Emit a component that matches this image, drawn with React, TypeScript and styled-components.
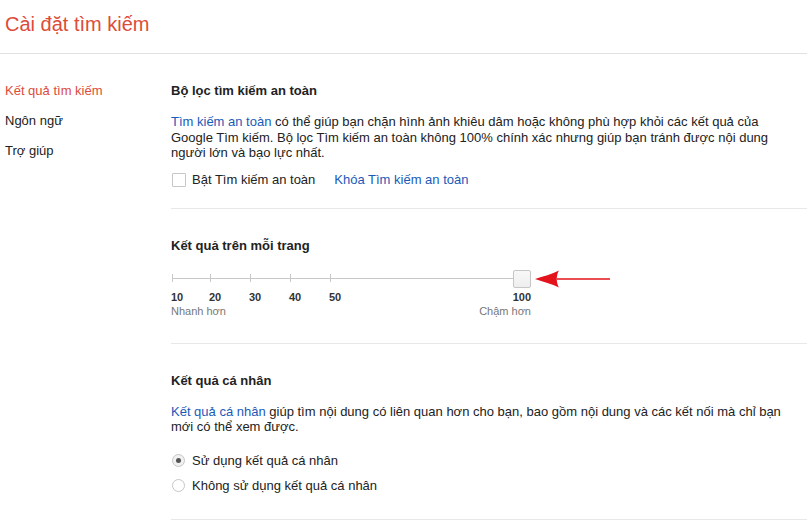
import styled, { createGlobalStyle } from "styled-components";

const GlobalStyle = createGlobalStyle`
  html, body {
    margin: 0;
    padding: 0;
    background: #fff;
  }
  body {
    font-family: "Liberation Sans", Arial, sans-serif;
    font-size: 13px;
    color: #222;
  }
`;

const COLORS = {
  red: "#dd4b39",
  text: "#222",
  link: "#1a5ab8",
  grey: "#777",
  divider: "#e8e8e8",
  control: "#c6c6c6",
};

const Page = styled.div`
  width: 807px;
`;

const Header = styled.header`
  padding: 12px 0 17px 5px;
  border-bottom: 1px solid #e1e1e1;
`;

const Title = styled.h1`
  margin: 0;
  font-size: 20px;
  line-height: 24px;
  font-weight: normal;
  color: ${COLORS.red};
`;

const Body = styled.div`
  display: flex;
`;

const Nav = styled.nav`
  width: 171px;
  flex: none;
  padding: 29px 0 0 5px;
  box-sizing: border-box;
  display: flex;
  flex-direction: column;
  gap: 14px;
`;

const NavItem = styled.div<{ $active?: boolean }>`
  line-height: 16px;
  color: ${({ $active }) => ($active ? COLORS.red : COLORS.text)};
  cursor: pointer;
`;

const Content = styled.main`
  flex: 1;
`;

const Section = styled.section<{ $bottom: number }>`
  padding: 29px 0 ${({ $bottom }) => $bottom}px 0;
  border-bottom: 1px solid ${COLORS.divider};
`;

const Heading = styled.h2`
  margin: 0;
  font-size: 13px;
  line-height: 16px;
  font-weight: bold;
  color: ${COLORS.text};
`;

const Paragraph = styled.p`
  margin: 15px 0 0;
  max-width: 620px;
  line-height: 15.5px;
`;

const Link = styled.a`
  color: ${COLORS.link};
  text-decoration: none;
  cursor: pointer;
`;

const CheckRow = styled.div`
  display: flex;
  align-items: center;
  margin-top: 12px;
  height: 14px;
  line-height: 14px;
`;

const CheckBox = styled.span`
  width: 12px;
  height: 12px;
  border: 1px solid ${COLORS.control};
  border-radius: 1px;
  background: #fff;
  margin: 0 6px 0 1px;
`;

const LockLink = styled(Link)`
  margin-left: 19px;
`;

const Slider = styled.div`
  margin-top: 16px;
  width: 360px;
`;

const Track = styled.div`
  position: relative;
  height: 18px;
  width: 360px;
  &::before {
    content: "";
    position: absolute;
    left: 1px;
    width: 351px;
    top: 8px;
    height: 1px;
    background: #c8c8c8;
  }
`;

const Tick = styled.span`
  position: absolute;
  top: 4px;
  width: 1px;
  height: 8px;
  background: #c8c8c8;
`;

const Thumb = styled.span`
  position: absolute;
  top: 0;
  left: 342px;
  width: 16px;
  height: 16px;
  border: 1px solid ${COLORS.control};
  border-radius: 2px;
  background: linear-gradient(#f8f8f8, #eeeeee);
  box-sizing: content-box;
`;

const Arrow = styled.svg`
  position: absolute;
  left: 364px;
  top: -2px;
`;

const Values = styled.div`
  position: relative;
  height: 13px;
  margin-top: 3px;
  font-size: 11px;
  line-height: 13px;
  font-weight: bold;
  color: #333;
`;

const Value = styled.span`
  position: absolute;
  top: 0;
`;

const Speed = styled.div`
  display: flex;
  justify-content: space-between;
  width: 360px;
  font-size: 11px;
  line-height: 14px;
  color: ${COLORS.grey};
`;

const RadioList = styled.div`
  margin-top: 19px;
  display: flex;
  flex-direction: column;
  gap: 11px;
`;

const RadioRow = styled.label`
  display: flex;
  align-items: center;
  height: 14px;
  line-height: 14px;
  cursor: pointer;
`;

const Radio = styled.span<{ $checked?: boolean }>`
  width: 13px;
  height: 13px;
  border-radius: 50%;
  border: 1px solid ${COLORS.control};
  background: ${({ $checked }) => ($checked ? "#f1f1f1" : "#fff")};
  margin: 0 7px 0 1px;
  display: flex;
  align-items: center;
  justify-content: center;
  box-sizing: border-box;
  &::after {
    content: "";
    display: ${({ $checked }) => ($checked ? "block" : "none")};
    width: 5px;
    height: 5px;
    border-radius: 50%;
    background: #555;
  }
`;

const ticks = [
  { value: 10, x: 1 },
  { value: 20, x: 39 },
  { value: 30, x: 79 },
  { value: 40, x: 119 },
  { value: 50, x: 159 },
];

export default function App() {
  return (
    <Page>
      <GlobalStyle />
      <Header>
        <Title>Cài đặt tìm kiếm</Title>
      </Header>
      <Body>
        <Nav>
          <NavItem $active>Kết quả tìm kiếm</NavItem>
          <NavItem>Ngôn ngữ</NavItem>
          <NavItem>Trợ giúp</NavItem>
        </Nav>
        <Content>
          <Section $bottom={21}>
            <Heading>Bộ lọc tìm kiếm an toàn</Heading>
            <Paragraph>
              <Link>Tìm kiếm an toàn</Link> có thể giúp bạn chặn hình ảnh khiêu dâm
              hoặc không phù hợp khỏi các kết quả của Google Tìm kiếm. Bộ lọc Tìm
              kiếm an toàn không 100% chính xác nhưng giúp bạn tránh được nội dung
              người lớn và bạo lực nhất.
            </Paragraph>
            <CheckRow>
              <CheckBox />
              Bật Tìm kiếm an toàn
              <LockLink>Khóa Tìm kiếm an toàn</LockLink>
            </CheckRow>
          </Section>

          <Section $bottom={25}>
            <Heading>Kết quả trên mỗi trang</Heading>
            <Slider>
              <Track>
                {ticks.map((t) => (
                  <Tick key={t.value} style={{ left: t.x }} />
                ))}
                <Thumb />
                <Arrow width="80" height="22" viewBox="0 0 80 22">
                  <path d="M22 10.2 H75 V11.8 H22 Z" fill="#e3121b" />
                  <path
                    d="M0 11 C8 8.5 17 6 24 2.5 C21 7 21 15 24 19.5 C17 16 8 13.5 0 11 Z"
                    fill="#e3121b"
                  />
                </Arrow>
              </Track>
              <Values>
                {ticks.map((t) => (
                  <Value key={t.value} style={{ left: t.x - 1 }}>
                    {t.value}
                  </Value>
                ))}
                <Value style={{ right: 0 }}>100</Value>
              </Values>
              <Speed>
                <span>Nhanh hơn</span>
                <span>Chậm hơn</span>
              </Speed>
            </Slider>
          </Section>

          <Section $bottom={26}>
            <Heading>Kết quả cá nhân</Heading>
            <Paragraph>
              <Link>Kết quả cá nhân</Link> giúp tìm nội dung có liên quan hơn cho bạn,
              bao gồm nội dung và các kết nối mà chỉ bạn mới có thể xem được.
            </Paragraph>
            <RadioList>
              <RadioRow>
                <Radio $checked />
                Sử dụng kết quả cá nhân
              </RadioRow>
              <RadioRow>
                <Radio />
                Không sử dụng kết quả cá nhân
              </RadioRow>
            </RadioList>
          </Section>
        </Content>
      </Body>
    </Page>
  );
}
